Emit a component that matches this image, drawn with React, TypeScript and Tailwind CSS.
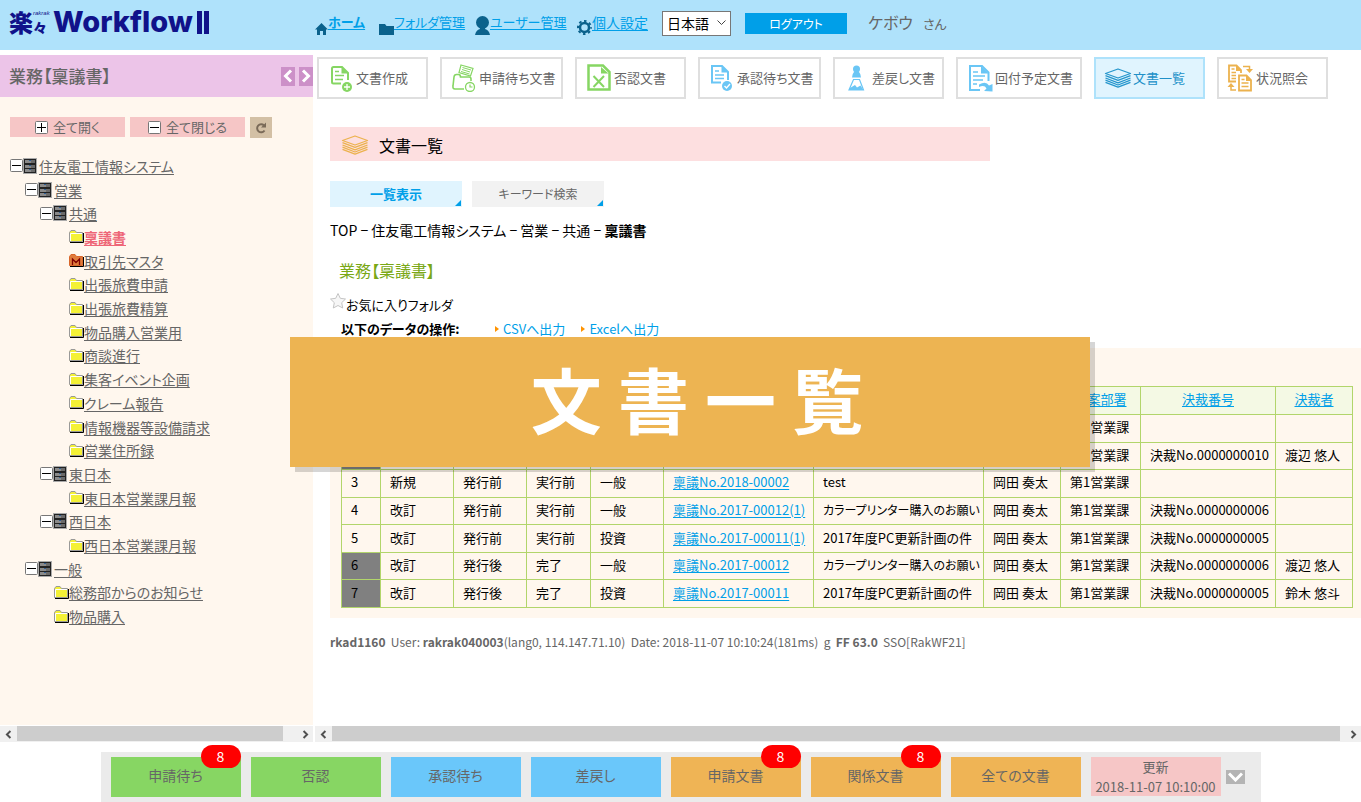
import type { ReactNode } from 'react'
import clsx from 'clsx'

/* ---------- icons ---------- */

const GREEN = '#86d663'
const BLUE = '#6ac6f5'
const AMBER = '#ecb24e'

function ToolSvg({ children }: { children: ReactNode }) {
  return (
    <svg viewBox="0 0 28 28" fill="none" className="size-7 shrink-0" aria-hidden="true">
      {children}
    </svg>
  )
}

function CreateIcon() {
  return (
    <ToolSvg>
      <path d="M14 19.5H6.500Q5 19.500 5 18V4.500Q5 3 6.500 3H15L21 9V16" stroke={GREEN} strokeWidth="2" />
      <path d="M14.500 3V9.500H21Z" fill={GREEN} />
      <path d="M8 7.500H12M8 11.500H17M8 15.500H16" stroke={GREEN} strokeWidth="1.500" />
      <circle cx="20" cy="23" r="5" fill={GREEN} />
      <path d="M20 20V26M17 23H23" stroke="#fff" strokeWidth="1.300" />
    </ToolSvg>
  )
}

function WaitingIcon() {
  return (
    <ToolSvg>
      <path d="M11 1L23 4.500L20.500 12L9 8.500Z" stroke={GREEN} strokeWidth="1.200" />
      <path d="M12.500 3.500L21 6M12 5.500L20 8M11 7.500L19.500 10" stroke={GREEN} strokeWidth="1" />
      <path d="M14 25H5Q2.500 25 3 22L4 13Q4.300 10.500 6.500 10.500H8.500Q10.500 10.500 10.500 13H19Q21 13 21 15V17" stroke={GREEN} strokeWidth="1.600" />
      <circle cx="20" cy="23" r="4.500" fill="#fff" stroke={GREEN} strokeWidth="1.300" />
      <path d="M20 20.500V23H22.500" stroke={GREEN} strokeWidth="1.200" />
    </ToolSvg>
  )
}

function RejectedIcon() {
  return (
    <ToolSvg>
      <path d="M3.500 1.500H18L24.500 8V25.500H3.500Z" stroke={GREEN} strokeWidth="2.500" />
      <path d="M16 3V9.500H23.500Z" fill={GREEN} />
      <path d="M8.500 12L19 23M19 12L8.500 23" stroke={GREEN} strokeWidth="2" />
    </ToolSvg>
  )
}

function ApprovalIcon() {
  return (
    <ToolSvg>
      <path d="M13 18.500H4V2H14L20 8V16" stroke={BLUE} strokeWidth="2" />
      <path d="M13.500 2V8.500H20Z" fill={BLUE} />
      <path d="M7 7H11M7 11H16M7 14.500H16" stroke={BLUE} strokeWidth="1.500" />
      <circle cx="19" cy="22" r="5" fill={BLUE} />
      <path d="M16.500 22L18.500 24L22 20" stroke="#fff" strokeWidth="1.400" />
    </ToolSvg>
  )
}

function SendBackIcon() {
  return (
    <ToolSvg>
      <circle cx="13.500" cy="5" r="3.500" fill={BLUE} />
      <path d="M11 8H16Q18 10 18 13.500H9Q9 10 11 8Z" fill={BLUE} />
      <path d="M10.500 15.500H16.500L20.500 26H6Z" stroke={BLUE} strokeWidth="1.200" />
      <path d="M7 24L12 21L14 23.500L17.500 21.500L20.500 26H6Z" fill={BLUE} />
    </ToolSvg>
  )
}

function ForwardIcon() {
  return (
    <ToolSvg>
      <path d="M14 26H4V2H16L22.500 8.500V17" stroke={BLUE} strokeWidth="2" />
      <path d="M15 2V9.500H22.500Z" fill={BLUE} />
      <path d="M7 8H12M7 12H19M7 16H17M7 20H11" stroke={BLUE} strokeWidth="1.600" />
      <path d="M13 20.500Q20 16.500 23 21.500L26.500 20V27.500L18 27L20.500 24.500Q18.500 20.500 13 23Z" fill={BLUE} />
    </ToolSvg>
  )
}

function StackIcon({ color = '#2596cc' }: { color?: string }) {
  return (
    <ToolSvg>
      <g stroke={color} strokeWidth="1.300" strokeLinejoin="round">
        <path d="M14 5L26.500 9.500L14 14L1.500 9.500Z" />
        <path d="M1.500 11.700L14 16.400L26.500 11.700M1.500 14L14 18.800L26.500 14M1.500 16.200L14 21L26.500 16.200M1.500 18.400L14 23.200L26.500 18.400" />
      </g>
    </ToolSvg>
  )
}

function StatusIcon() {
  return (
    <ToolSvg>
      <path d="M9 17.500H2V1.500H9.500L14 6V9" stroke={AMBER} strokeWidth="1.800" />
      <path d="M9 1V7H14.500Z" fill={AMBER} />
      <path d="M4.500 5H7.500M4.500 8.500H9M4.500 11.500H9M4.500 14.500H9" stroke={AMBER} strokeWidth="1.300" />
      <path d="M12 11.500H19.500L24 16V26.500H12Z" fill="#fff" stroke={AMBER} strokeWidth="1.800" />
      <path d="M19 11V17H24.500Z" fill={AMBER} />
      <path d="M14.500 15.500H17.500M14.500 19H21.500M14.500 22.500H21.500" stroke={AMBER} strokeWidth="1.300" />
      <path d="M16 2.500H22.500V6M4 21.500V26H9" stroke={AMBER} strokeWidth="1.500" />
      <path d="M19 5H26L22.500 9ZM.500 23L4 19L7.500 23Z" fill={AMBER} />
    </ToolSvg>
  )
}

function ToggleBox({ plus }: { plus?: boolean }) {
  return (
    <svg viewBox="0 0 13 13" className="size-[13px] shrink-0" aria-hidden="true">
      <rect x=".5" y=".5" width="12" height="12" rx="1" fill="#fff" stroke="#777" />
      <path d={plus ? 'M2 6.500H11M6.500 2V11' : 'M2 6.500H11'} stroke="#000" />
    </svg>
  )
}

function CabinetIcon() {
  return (
    <svg viewBox="0 0 14 16" className="h-4 w-[14px] shrink-0" aria-hidden="true">
      <rect width="14" height="16" fill="#aaa" />
      <rect x="1" y="1" width="12" height="14" fill="#222" />
      <path d="M2 3.500H12M2 8.500H12M2 12.500H12" stroke="#8a8a8a" strokeWidth="3" />
      <path d="M8 3.500H12M8 8.500H12M8 12.500H12" stroke="#6a6a6a" strokeWidth="3" />
      <path d="M6 2.500H8M6 7.500H8M6 11.500H8" stroke="#2f5f95" />
    </svg>
  )
}

function FolderIcon({ master }: { master: boolean }) {
  return (
    <svg viewBox="0 0 15 13" className="h-[13px] w-[15px] shrink-0" aria-hidden="true">
      <path d="M1 12.500H14.500V3" stroke="#000" fill="none" />
      <path
        d="M.5 11.500V2.500L2 .500H6L7.500 2.500H13.500V11.500Z"
        fill={master ? '#e07c3c' : '#f4f136'}
        stroke={master ? '#d9662a' : '#999'}
      />
      {master ? (
        <path d="M3.500 11V5L7 8.500L10.500 5V11" stroke="#800000" strokeWidth="1.300" fill="none" />
      ) : (
        <path d="M1.500 11V3.500H13" stroke="#fff" fill="none" />
      )}
    </svg>
  )
}

function Chevron({ d, className }: { d: string; className: string }) {
  return (
    <svg viewBox="0 0 14 14" fill="none" className={className} aria-hidden="true">
      <path d={d} stroke="currentColor" strokeWidth="3" />
    </svg>
  )
}

const LEFT = 'M10 1.500L4.500 7L10 12.500'
const RIGHT = 'M4 1.500L9.500 7L4 12.500'

/* ---------- data ---------- */

const TOOLS = [
  { label: '文書作成', icon: <CreateIcon />, width: 'w-[111px]' },
  { label: '申請待ち文書', icon: <WaitingIcon />, width: 'w-[123px]' },
  { label: '否認文書', icon: <RejectedIcon />, width: 'w-[111px]' },
  { label: '承認待ち文書', icon: <ApprovalIcon />, width: 'w-[123px]' },
  { label: '差戻し文書', icon: <SendBackIcon />, width: 'w-[111px]' },
  { label: '回付予定文書', icon: <ForwardIcon />, width: 'w-[126px]' },
  { label: '文書一覧', icon: <StackIcon />, width: 'w-[111px]', active: true },
  { label: '状況照会', icon: <StatusIcon />, width: 'w-[111px]' },
]

type Node = { label: string; indent: string; kind: 'cabinet' | 'folder' | 'master'; current?: boolean }

const TREE: Node[] = [
  { label: '住友電工情報システム', indent: 'pl-[10px]', kind: 'cabinet' },
  { label: '営業', indent: 'pl-[25px]', kind: 'cabinet' },
  { label: '共通', indent: 'pl-[40px]', kind: 'cabinet' },
  { label: '稟議書', indent: 'pl-[69px]', kind: 'folder', current: true },
  { label: '取引先マスタ', indent: 'pl-[69px]', kind: 'master' },
  { label: '出張旅費申請', indent: 'pl-[69px]', kind: 'folder' },
  { label: '出張旅費精算', indent: 'pl-[69px]', kind: 'folder' },
  { label: '物品購入営業用', indent: 'pl-[69px]', kind: 'folder' },
  { label: '商談進行', indent: 'pl-[69px]', kind: 'folder' },
  { label: '集客イベント企画', indent: 'pl-[69px]', kind: 'folder' },
  { label: 'クレーム報告', indent: 'pl-[69px]', kind: 'folder' },
  { label: '情報機器等設備請求', indent: 'pl-[69px]', kind: 'folder' },
  { label: '営業住所録', indent: 'pl-[69px]', kind: 'folder' },
  { label: '東日本', indent: 'pl-[40px]', kind: 'cabinet' },
  { label: '東日本営業課月報', indent: 'pl-[69px]', kind: 'folder' },
  { label: '西日本', indent: 'pl-[40px]', kind: 'cabinet' },
  { label: '西日本営業課月報', indent: 'pl-[69px]', kind: 'folder' },
  { label: '一般', indent: 'pl-[25px]', kind: 'cabinet' },
  { label: '総務部からのお知らせ', indent: 'pl-[54px]', kind: 'folder' },
  { label: '物品購入', indent: 'pl-[54px]', kind: 'folder' },
]

const HEADS = ['', '', '', '', '', '', '', '', '起案部署', '決裁番号', '決裁者']

const ROWS = [
  ['', '', '', '', '', '', '', '', '第1営業課', '', ''],
  ['', '', '', '', '', '', '', '', '第1営業課', '決裁No.0000000010', '渡辺 悠人'],
  ['3', '新規', '発行前', '実行前', '一般', '稟議No.2018-00002', 'test', '岡田 奏太', '第1営業課', '', ''],
  ['4', '改訂', '発行前', '実行前', '一般', '稟議No.2017-00012(1)', 'カラープリンター購入のお願い', '岡田 奏太', '第1営業課', '決裁No.0000000006', ''],
  ['5', '改訂', '発行前', '実行前', '投資', '稟議No.2017-00011(1)', '2017年度PC更新計画の件', '岡田 奏太', '第1営業課', '決裁No.0000000005', ''],
  ['6', '改訂', '発行後', '完了', '一般', '稟議No.2017-00012', 'カラープリンター購入のお願い', '岡田 奏太', '第1営業課', '決裁No.0000000006', '渡辺 悠人'],
  ['7', '改訂', '発行後', '完了', '投資', '稟議No.2017-00011', '2017年度PC更新計画の件', '岡田 奏太', '第1営業課', '決裁No.0000000005', '鈴木 悠斗'],
]

const SUBJECT_COL = 6

// Finished documents get a dark number cell
const DONE_ROWS = [1, 5, 6]

const SHORTCUTS = [
  { label: '申請待ち', color: 'bg-[#87d663]', badge: 8 },
  { label: '否認', color: 'bg-[#87d663]' },
  { label: '承認待ち', color: 'bg-[#6ac7fa]' },
  { label: '差戻し', color: 'bg-[#6ac7fa]' },
  { label: '申請文書', color: 'bg-[#efb455]', badge: 8 },
  { label: '関係文書', color: 'bg-[#efb455]', badge: 8 },
  { label: '全ての文書', color: 'bg-[#efb455]' },
]

/* ---------- sections ---------- */

function Header() {
  const link = 'leading-5 text-[#009fe8] underline underline-offset-2'
  return (
    <header className="flex h-[50px] items-start bg-[#afe2fb] text-[#666]">
      <div className="flex w-[315px] shrink-0 items-start pl-[9px] pt-1 text-[#10128a]">
        <span className="text-2xl leading-9 font-black">楽</span>
        <span className="flex w-5 flex-col pt-[6px]">
          <span className="font-['Liberation_Sans',sans-serif] text-[6px] leading-[6px] italic">rakrak</span>
          <span className="mt-1 text-sm leading-[14px] font-black">々</span>
        </span>
        <span className="font-['Inter','Noto_Sans_CJK_JP',sans-serif] text-[29px] leading-9 font-extrabold">Workflow</span>
        <svg viewBox="0 0 12 23" className="ml-1 mt-[7px] h-[23px] w-3" aria-hidden="true">
          <path d="M0 0H5V23H0ZM7 0H12V23H7Z" fill="#10128a" />
        </svg>
      </div>
      <nav className="flex items-start pt-3">
        <span className="flex w-16 items-end">
          <svg viewBox="0 0 13 12" className="h-3 w-[13px] shrink-0 translate-y-[3px]" aria-hidden="true">
            <path d="M6.500 0L13 6.500H11V12H8V8H5V12H2V6.500H0Z" fill="#0b628c" />
          </svg>
          <a href="#home" className={clsx(link, 'text-[13px] font-bold')}>ホーム</a>
        </span>
        <span className="flex w-24 items-end">
          <svg viewBox="0 0 15 11" className="h-[11px] w-[15px] shrink-0 translate-y-[3px]" aria-hidden="true">
            <path d="M0 0H6L7.500 2H15V11H0Z" fill="#0b628c" />
          </svg>
          <a href="#folders" className={clsx(link, 'text-[13px]')}>フォルダ管理</a>
        </span>
        <span className="flex w-[102px] items-end">
          <svg viewBox="0 0 15 19" className="h-[19px] w-[15px] shrink-0 translate-y-[3px]" aria-hidden="true">
            <circle cx="7.500" cy="6.500" r="6.500" fill="#0b628c" />
            <path d="M5 11H10V13Q14 14 15 19H0Q1 14 5 13Z" fill="#0b628c" />
          </svg>
          <a href="#users" className={clsx(link, 'text-[13px]')}>ユーザー管理</a>
        </span>
        <span className="flex w-[85px] items-end">
          <svg viewBox="0 0 15 15" className="size-[15px] shrink-0 translate-y-[3px]" aria-hidden="true">
            <circle cx="7.500" cy="7.500" r="4.500" fill="none" stroke="#0b628c" strokeWidth="2.500" />
            <circle cx="7.500" cy="7.500" r="6.500" fill="none" stroke="#0b628c" strokeWidth="2" strokeDasharray="2.500 2.605" strokeDashoffset="1.250" />
          </svg>
          <a href="#settings" className={clsx(link, 'text-sm')}>個人設定</a>
        </span>
      </nav>
      <div className="relative mt-[10px]">
        <select aria-label="言語" className="h-[25px] w-[69px] appearance-none border border-[#777] bg-white pl-1 text-sm leading-5 text-black">
          <option>日本語</option>
        </select>
        <svg viewBox="0 0 9 6" fill="none" className="pointer-events-none absolute right-[5px] top-[10px] h-[6px] w-[9px]" aria-hidden="true">
          <path d="M.5 .500L4.500 4.500L8.500 .500" stroke="#444" />
        </svg>
      </div>
      <button type="button" className="ml-[14px] mt-[13px] h-[21px] w-[102px] bg-[#009fe8] text-xs leading-5 text-white">
        ログアウト
      </button>
      <p className="ml-[21px] mt-[10px] flex items-baseline gap-[10px]">
        <span className="text-base leading-6">ケボウ</span>
        <span className="text-[13px]">さん</span>
      </p>
    </header>
  )
}

function ScrollBar({ end }: { end: string }) {
  return (
    <div className="flex h-4 items-center bg-[#f0f0f0] text-[#505050]">
      <Chevron d={LEFT} className="mx-px h-[9px] w-[15px]" />
      <div className="h-[15px] flex-1 self-start bg-[#cdcdcd]" />
      <div className={clsx('flex justify-end', end)}>
        <Chevron d={RIGHT} className="h-[9px] w-[15px]" />
      </div>
    </div>
  )
}

function Sidebar() {
  return (
    <aside className="flex w-[313px] shrink-0 flex-col pt-[5px] text-[#666]">
      <div className="flex h-[42px] items-center bg-[#ecc4e8] pl-[9px]">
        <h2 className="flex-1 text-[17px] font-medium">業務【稟議書】</h2>
        <div className="flex gap-1 text-white">
          <button type="button" aria-label="戻る" className="flex h-[19px] w-[14px] items-center bg-[#cc90c8]">
            <Chevron d={LEFT} className="size-[14px]" />
          </button>
          <button type="button" aria-label="進む" className="flex h-[19px] w-[14px] items-center bg-[#cc90c8]">
            <Chevron d={RIGHT} className="size-[14px]" />
          </button>
        </div>
      </div>
      <div className="flex-1 bg-[#fff7ee]">
        <div className="flex gap-[5px] pl-[10px] pt-5">
          <button type="button" className="flex h-5 w-[115px] items-center justify-center gap-[5px] bg-[#f6c6c6] text-[13px]">
            <ToggleBox plus />
            全て開く
          </button>
          <button type="button" className="flex h-5 w-[115px] items-center justify-center gap-[5px] bg-[#f6c6c6] text-[13px]">
            <ToggleBox />
            全て閉じる
          </button>
          <button type="button" aria-label="再読込" className="flex h-[21px] w-[22px] items-center justify-center bg-[#d3c0a5]">
            <svg viewBox="0 0 12 12" fill="none" className="size-3" aria-hidden="true">
              <path d="M9.500 8.500A4 4 0 1 1 9 3.500" stroke="#7a6a58" strokeWidth="2" />
              <path d="M11 .500V5.500H6Z" fill="#7a6a58" />
            </svg>
          </button>
        </div>
        <ul className="mt-4 grid h-[474px] auto-rows-fr">
          {TREE.map((node) => (
            <li key={node.label} className={clsx('flex items-center', node.indent)}>
              {node.kind === 'cabinet' ? (
                <>
                  <ToggleBox />
                  <CabinetIcon />
                </>
              ) : (
                <FolderIcon master={node.kind === 'master'} />
              )}
              <a
                href="#folder"
                className={clsx(
                  'text-sm leading-5 whitespace-nowrap underline underline-offset-2',
                  node.kind === 'cabinet' && 'ml-[2px]',
                  node.current && 'font-bold text-[#ee6677]',
                )}
              >
                {node.label}
              </a>
            </li>
          ))}
        </ul>
      </div>
      <div className="mt-px">
        <ScrollBar end="w-[30px]" />
      </div>
    </aside>
  )
}

function Toolbar() {
  return (
    <div className="flex gap-3 pl-1 pt-[7px]">
      {TOOLS.map((tool) => (
        <button
          key={tool.label}
          type="button"
          className={clsx(
            'flex h-[42px] shrink-0 items-center gap-px border-2 pl-2 text-[13px] whitespace-nowrap',
            tool.width,
            tool.active ? 'border-[#aee2fb] bg-[#e0f4fe] text-[#2090c8]' : 'border-[#dfdfdf] bg-white text-[#666]',
          )}
        >
          {tool.icon}
          {tool.label}
        </button>
      ))}
    </div>
  )
}

function Tab({ label, active }: { label: string; active?: boolean }) {
  return (
    <button
      type="button"
      className={clsx(
        'relative h-[26px] w-[132px]',
        active ? 'bg-[#e0f4fe] text-[13px] font-bold text-[#009fe8]' : 'bg-[#f2f2f2] text-xs text-[#666]',
      )}
    >
      {label}
      <svg viewBox="0 0 6 6" className="absolute right-px bottom-px size-[6px]" aria-hidden="true">
        <path d="M6 0V6H0Z" fill="#009fe8" />
      </svg>
    </button>
  )
}

function ExportLink({ children }: { children: ReactNode }) {
  return (
    <a href="#export" className="flex items-center gap-1 text-[13px] text-[#009fe8]">
      <svg viewBox="0 0 4 6" className="h-[6px] w-1" aria-hidden="true">
        <path d="M0 0L4 3L0 6Z" fill="#ff9300" />
      </svg>
      {children}
    </a>
  )
}

function DocumentTable() {
  return (
    <table className="h-[222px] w-full table-fixed border-collapse text-[13px] leading-4 text-black">
      <colgroup>
        <col className="w-[39px]" />
        <col className="w-[73px]" />
        <col className="w-[73px]" />
        <col className="w-[64px]" />
        <col className="w-[73px]" />
        <col className="w-[150px]" />
        <col />
        <col className="w-[77px]" />
        <col className="w-[80px]" />
        <col className="w-[135px]" />
        <col className="w-[77px]" />
      </colgroup>
      <thead>
        <tr className="h-7 bg-[#f4f9e4]">
          {HEADS.map((head, i) => (
            <th key={i} className="border border-[#b2d56b] pb-1 font-normal">
              {head && (
                <a href="#sort" className="text-[#009fe8] underline underline-offset-2">
                  {head}
                </a>
              )}
            </th>
          ))}
        </tr>
      </thead>
      <tbody>
        {ROWS.map((row, r) => (
          <tr key={r}>
            {row.map((cell, c) => (
              <td
                key={c}
                className={clsx(
                  'border border-[#b2d56b] pb-[2px] pl-[9px] whitespace-nowrap',
                  c === 0 && DONE_ROWS.includes(r) && 'bg-[#808080]',
                  // long kana subjects would run past the cell
                  c === SUBJECT_COL && cell.startsWith('カラー') && 'text-xs',
                )}
              >
                {c === 5 && cell ? (
                  <a href="#doc" className="text-[#009fe8] underline underline-offset-2">
                    {cell}
                  </a>
                ) : (
                  cell
                )}
              </td>
            ))}
          </tr>
        ))}
      </tbody>
    </table>
  )
}

function Content() {
  return (
    <main className="flex min-w-0 flex-1 flex-col">
      <Toolbar />
      <div className="flex-1 pl-[17px] text-black">
        <h1 className="mt-7 flex h-[34px] max-w-[660px] items-center gap-[10px] bg-[#fddfe0] pl-[11px] pt-[2px] text-base">
          <StackIcon color={AMBER} />
          文書一覧
        </h1>
        <div className="mt-5 flex gap-[10px]">
          <Tab label="一覧表示" active />
          <Tab label="キーワード検索" />
        </div>
        <p className="mt-[13px] text-sm leading-5">
          TOP − 住友電工情報システム − 営業 − 共通 − <b>稟議書</b>
        </p>
        <h2 className="mt-[18px] pl-[9px] text-base leading-6 text-[#7aa816]">業務【稟議書】</h2>
        <p className="mt-[11px] flex items-center text-[13px] leading-6">
          <svg viewBox="0 0 16 16" className="size-4 -translate-y-1" aria-hidden="true">
            <path d="M8 .500L10.300 5.300L15.500 6L11.700 9.700L12.700 15L8 12.500L3.300 15L4.300 9.700L.500 6L5.700 5.300Z" fill="#f6f6f6" stroke="#c4c4c4" />
          </svg>
          お気に入りフォルダ
        </p>
        <div className="flex h-6 items-center gap-4 pl-[11px]">
          <span className="w-[138px] text-[13px] font-bold">以下のデータの操作:</span>
          <ExportLink>CSVへ出力</ExportLink>
          <ExportLink>Excelへ出力</ExportLink>
        </div>
        <section className="mt-[7px] bg-[#fff7ee] pt-[38px] pr-2 pb-[10px] pl-[11px]">
          <DocumentTable />
        </section>
        <p className="mt-[14px] text-xs leading-5 whitespace-pre text-[#666]">
          <b>rkad1160</b>
          {'  User: '}
          <b>rakrak040003</b>
          {'(lang0, 114.147.71.10)  Date: 2018-11-07 10:10:24(181ms)  g  '}
          <b>FF 63.0</b>
          {'  SSO[RakWF21]'}
        </p>
      </div>
      <div className="pl-[2px]">
        <ScrollBar end="w-[21px]" />
      </div>
    </main>
  )
}

function ShortcutBar() {
  return (
    <footer className="mx-auto mt-[10px] flex h-[50px] w-full max-w-[1160px] gap-[10px] bg-[#ebebeb] pt-[5px] pl-[10px] text-[#666]">
      {SHORTCUTS.map((item) => (
        <button key={item.label} type="button" className={clsx('relative h-10 w-[130px] pb-1 text-sm', item.color)}>
          {item.label}
          {item.badge && (
            <span className="absolute -top-3 right-0 h-[23px] w-10 rounded-xl bg-[#ff0000] text-sm leading-[22px] text-white">
              {item.badge}
            </span>
          )}
        </button>
      ))}
      <button type="button" className="h-[39px] w-[130px] bg-[#f6c6c6] pb-[2px] text-[13px] leading-5">
        更新
        <br />
        2018-11-07 10:10:00
      </button>
      <button type="button" aria-label="開く" className="-ml-[5px] mt-[13px] flex h-[14px] w-[19px] items-center justify-center bg-[#b4b4b4] text-white">
        <svg viewBox="0 0 15 10" fill="none" className="h-[10px] w-[15px]" aria-hidden="true">
          <path d="M1 1.500L7.500 8L14 1.500" stroke="currentColor" strokeWidth="3" />
        </svg>
      </button>
    </footer>
  )
}

export default function App() {
  return (
    <div className="relative flex min-h-screen flex-col bg-white font-['Noto_Sans_CJK_JP','Liberation_Sans',sans-serif] [font-feature-settings:'palt']">
      <Header />
      <div className="flex flex-1">
        <Sidebar />
        <Content />
      </div>
      <ShortcutBar />

      {/* Title banner over the page */}
      <div className="absolute top-[337px] left-[290px] flex h-[130px] w-[800px] items-center justify-center bg-[#edb452] pb-[10px] pl-[14px] text-[71px] font-bold text-white shadow-[5px_5px_0_rgba(0,0,0,0.16)]">
        文 書 一 覧
      </div>
    </div>
  )
}
